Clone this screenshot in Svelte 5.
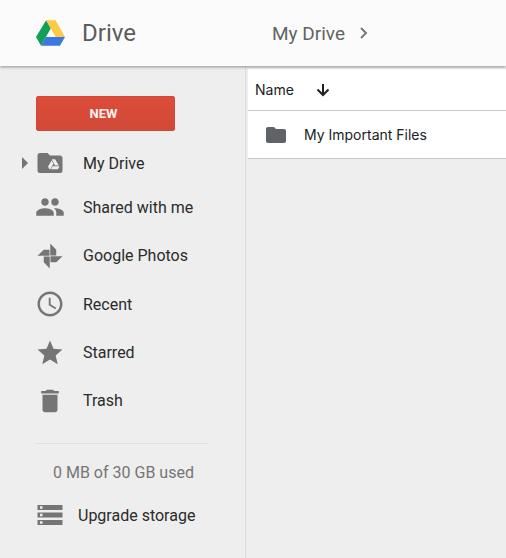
<script>
  const items = [
    {
      label: 'My Drive',
      expandable: true,
      path: 'M13.75 9H16.14L19 14H16.05L13.5 9.46M18.3 17H12.75L14.15 14.5H19.27L19.53 14.96M11.5 17L10.4 14.86L13.24 9.9L14.74 12.56L12.25 17M20 6H12L10 4H4A2 2 0 0 0 2 6V18A2 2 0 0 0 4 20H20A2 2 0 0 0 22 18V8C22 6.89 21.1 6 20 6Z'
    },
    {
      label: 'Shared with me',
      path: 'M16 11c1.66 0 2.99-1.34 2.99-3S17.66 5 16 5c-1.66 0-3 1.34-3 3s1.34 3 3 3zm-8 0c1.66 0 2.99-1.34 2.99-3S9.66 5 8 5C6.34 5 5 6.34 5 8s1.34 3 3 3zm0 2c-2.33 0-7 1.17-7 3.5V19h14v-2.5c0-2.33-4.67-3.5-7-3.5zm8 0c-.29 0-.62.02-.97.05 1.16.84 1.97 1.97 1.97 3.45V19h6v-2.5c0-2.33-4.67-3.5-7-3.5z'
    },
    {
      label: 'Google Photos',
      path: 'M12.200 2L17 7V11.600H12.200ZM22 12.200L17 17H12.400V12.200ZM11.800 22L7 17V12.400H11.800ZM2 11.800L7 7H11.600V11.800Z'
    },
    {
      label: 'Recent',
      path: 'M11.99 2C6.47 2 2 6.48 2 12s4.47 10 9.99 10C17.52 22 22 17.52 22 12S17.52 2 11.99 2zM12 20c-4.42 0-8-3.58-8-8s3.58-8 8-8 8 3.58 8 8-3.58 8-8 8zm.5-13H11v6l5.25 3.15.75-1.23-4.5-2.67z'
    },
    {
      label: 'Starred',
      path: 'M12 17.27L18.18 21l-1.64-7.03L22 9.24l-7.19-.61L12 2 9.19 8.63 2 9.24l5.46 4.73L5.82 21z'
    },
    {
      label: 'Trash',
      path: 'M6 19c0 1.1.9 2 2 2h8c1.1 0 2-.9 2-2V7H6v12zM19 4h-3.500l-1-1h-5l-1 1H5v2h14V4z'
    }
  ];
  const files = ['My Important Files'];
</script>

<div class="app">
  <header>
    <a class="brand" href="#home">
      <svg class="logo" viewBox="110 58 86 76" aria-hidden="true">
        <path fill="#11a05a" d="M140 58L154 82L125 134L110 108Z" />
        <path fill="#fdcb43" d="M140 58H168L196 108H168Z" />
        <path fill="#3d78e0" d="M139 108H196L181 134H125Z" />
      </svg>
      <span>Drive</span>
    </a>
    <nav class="crumbs" aria-label="Breadcrumb">
      <a href="#my-drive">My Drive</a>
      <svg viewBox="0 0 8 12" aria-hidden="true"><path d="M1 1L6 6L1 11" /></svg>
    </nav>
  </header>

  <div class="body">
    <aside>
      <button class="new" type="button">NEW</button>
      <nav class="items" aria-label="Drive">
        {#each items as item}
          <a class="item" class:first={item.expandable} href="#{item.label}">
            <span class="expander">
              {#if item.expandable}
                <svg viewBox="0 0 6 12" aria-hidden="true"><path d="M0 0L6 6L0 12Z" /></svg>
              {/if}
            </span>
            <svg class="icon" viewBox="0 0 24 24" aria-hidden="true">
              <path fill-rule="evenodd" d={item.path} />
            </svg>
            <span>{item.label}</span>
          </a>
        {/each}
      </nav>
      <hr />
      <p class="usage">0 MB of 30 GB used</p>
      <a class="upgrade" href="#storage">
        <svg class="icon" viewBox="0 0 24 24" aria-hidden="true">
          <path d="M2 20h20v-4H2v4zm2-3h2v2H4v-2zM2 4v4h20V4H2zm4 3H4V5h2v2zm-4 7h20v-4H2v4zm2-3h2v2H4v-2z" />
        </svg>
        <span>Upgrade storage</span>
      </a>
    </aside>

    <main>
      <table>
        <thead>
          <tr>
            <th scope="col">
              <button class="sort" type="button">
                Name
                <svg viewBox="0 0 14 14" aria-hidden="true"><path d="M7 1V12M1.500 6.500L7 12L12.500 6.500" /></svg>
              </button>
            </th>
          </tr>
        </thead>
        <tbody>
          {#each files as file}
            <tr>
              <td>
                <a class="file" href="#{file}">
                  <svg viewBox="0 0 24 24" aria-hidden="true">
                    <path d="M10 4H4c-1.100 0-2 .9-2 2v12c0 1.100.9 2 2 2h16c1.100 0 2-.9 2-2V8c0-1.100-.9-2-2-2h-8z" />
                  </svg>
                  {file}
                </a>
              </td>
            </tr>
          {/each}
        </tbody>
      </table>
    </main>
  </div>
</div>

<style>
  :global(body) {
    background: #eeeeee;
  }

  .app {
    display: flex;
    flex-direction: column;
    min-height: 100vh;
    font-family: Roboto, 'Liberation Sans', sans-serif;
    font-size: 16px;
    color: #2b2b2b;
  }

  a {
    color: inherit;
    text-decoration: none;
  }

  header {
    position: relative;
    display: flex;
    align-items: center;
    height: 66px;
    background: #fbfbfb;
    box-shadow: 0 1px 3px rgba(0, 0, 0, 0.4);
  }

  .brand {
    box-sizing: border-box;
    display: flex;
    align-items: center;
    gap: 17px;
    width: 272px;
    padding-left: 36px;
    font-size: 24px;
    color: #5c5c5c;
  }

  .logo {
    width: 29px;
    height: 26px;
  }

  .crumbs {
    display: flex;
    align-items: center;
    gap: 15px;
    font-size: 19px;
    color: #636363;
  }

  .crumbs svg {
    width: 8px;
    height: 12px;
    fill: none;
    stroke: #777777;
    stroke-width: 2;
  }

  .body {
    display: flex;
    flex: 1;
  }

  aside {
    box-sizing: border-box;
    flex: none;
    width: 246px;
    padding-top: 30px;
    border-right: 1px solid #dcdcdc;
  }

  .new {
    display: block;
    width: 139px;
    height: 35px;
    margin: 0 0 12px 36px;
    padding: 0 4px 0 0;
    border: 1px solid #cf4a39;
    border-radius: 2px;
    background: linear-gradient(#dd4c3a, #d14937);
    color: #fdf1ef;
    font: 700 13px Roboto, 'Liberation Sans', sans-serif;
  }

  .items {
    display: flex;
    flex-direction: column;
    justify-content: space-between;
    min-height: 282px;
  }

  .item {
    display: flex;
    align-items: center;
    height: 48px;
  }

  .first {
    height: 40px;
  }

  .item .icon {
    margin-right: 18px;
  }

  .expander {
    display: flex;
    width: 13px;
    padding-left: 22px;
  }

  .expander svg {
    width: 6px;
    height: 12px;
    fill: #757575;
  }

  .icon {
    flex: none;
    width: 30px;
    height: 30px;
    fill: #757575;
  }

  hr {
    height: 1px;
    margin: 18px 37px 0 35px;
    border: 0;
    background: #e0e0e0;
  }

  .usage {
    margin: 18px 0 16px 53px;
    line-height: 22px;
    color: #757575;
  }

  .upgrade {
    display: flex;
    align-items: center;
    gap: 13px;
    padding-left: 35px;
  }

  main {
    flex: 1;
    min-width: 0;
    padding: 3px 0 0 2px;
  }

  table {
    width: 100%;
    border-spacing: 0;
    background: #ffffff;
    font: 14px Inter, 'Liberation Sans', sans-serif;
    color: #202124;
  }

  th,
  td {
    padding: 0;
    border-bottom: 1px solid #c7c7c7;
    text-align: left;
  }

  th {
    height: 41px;
    font-weight: 400;
  }

  td {
    height: 47px;
  }

  .sort {
    display: flex;
    align-items: center;
    gap: 22px;
    padding: 0 0 0 7px;
    border: 0;
    background: none;
    color: inherit;
    font: inherit;
  }

  .sort svg {
    width: 14px;
    height: 14px;
    fill: none;
    stroke: #202124;
    stroke-width: 2;
  }

  .file {
    display: flex;
    align-items: center;
    gap: 16px;
    padding-left: 16px;
  }

  .file svg {
    width: 24px;
    height: 24px;
    fill: #5f6368;
  }
</style>
